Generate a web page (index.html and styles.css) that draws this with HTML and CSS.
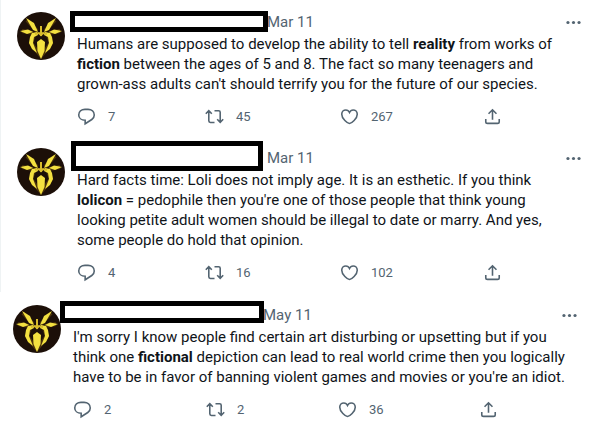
FILE: index.html
```
<!DOCTYPE html>
<html lang="en">
<head>
  <meta charset="UTF-8" />
  <meta name="viewport" content="width=device-width, initial-scale=1.0"/>
  <title>Tweets</title>
  <link rel="stylesheet" href="styles.css">
</head>
<body>

<!-- shared icons -->
<svg class="sprite" aria-hidden="true">
  <symbol id="avatar" viewBox="0 0 48 48">
    <circle cx="24" cy="24" r="24" fill="#1c0f08"/>
    <g fill="none" stroke="#6b4c0c" stroke-width="4" opacity=".6">
      <path d="M17 23 L14 31 L19 38 L24 44 L29 38 L34 31 L31 23"/>
      <path d="M10 8 L20 19 M38 8 L28 19 M5 19 L16 21 M43 19 L32 21"/>
    </g>
    <g fill="#f3e040">
      <path d="M9 6 L17 11 L21 20 L16 18 Z"/>
      <path d="M39 6 L31 11 L27 20 L32 18 Z"/>
      <path d="M3 19 L11 17.500 L16 20 L10 22 Z"/>
      <path d="M45 19 L37 17.500 L32 20 L38 22 Z"/>
      <path d="M24 27 L28 30 L27.500 39 L24 47 L20.500 39 L20 30 Z"/>
      <path d="M20 20 L15 21 L13 25 L12 31 L15 37 L20 41 L18 36 L16 31 L17 25 L21 23 Z"/>
      <path d="M28 20 L33 21 L35 25 L36 31 L33 37 L28 41 L30 36 L32 31 L31 25 L27 23 Z"/>
    </g>
    <path d="M24 14 V24 M18 22 L22 21 L24 23 L26 21 L30 22" fill="none" stroke="#d8bc2c" stroke-width="2"/>
  </symbol>
  <symbol id="reply" viewBox="0 0 24 24">
    <path d="M14 3 H10 C5.500 3 2.200 6 2.200 10 C2.200 14 5.500 16.700 10.300 16.700 V21.200 C12.500 19.800 16.800 17.100 18.700 15.800 C20.800 14.300 21.800 12.100 21.800 10 C21.800 6 18.500 3 14 3 Z"/>
  </symbol>
  <symbol id="retweet" viewBox="0 0 24 24">
    <path d="M1 8.500 L4.800 4.700 L8.600 8.500 M4.800 5 V17.500 Q4.800 19.500 6.800 19.500 H12 M12 4.700 H17.200 Q19.200 4.700 19.200 6.700 V19 M15.400 15.500 L19.200 19.300 L23 15.500"/>
  </symbol>
  <symbol id="like" viewBox="0 0 24 24">
    <path d="M12 20.900 C9.500 20.800 2.200 14.800 2.200 9.100 C2.200 6 4.600 3.700 7.400 3.700 C9.600 3.700 11.200 5 12 6.800 C12.800 5 14.400 3.700 16.600 3.700 C19.400 3.700 21.800 6 21.800 9.100 C21.800 14.800 14.500 20.800 12 20.900 Z"/>
  </symbol>
  <symbol id="share" viewBox="0 0 24 24">
    <path d="M12 16 V4 M7 8.500 L12 3.500 L17 8.500 M3.500 15 V18.500 Q3.500 20.700 5.700 20.700 H18.300 Q20.500 20.700 20.500 18.500 V15"/>
  </symbol>
  <symbol id="more" viewBox="0 0 24 24">
    <circle cx="5" cy="12" r="2"/>
    <circle cx="12" cy="12" r="2"/>
    <circle cx="19" cy="12" r="2"/>
  </symbol>
</svg>

<main>

  <article class="tweet">
    <svg class="avatar"><use href="#avatar"/></svg>
    <div class="content">
      <header class="head">
        <span class="redacted"></span>
        <time class="date">Mar 11</time>
        <button class="more" aria-label="More"><svg class="icon dots"><use href="#more"/></svg></button>
      </header>
      <p class="text">Humans are supposed to develop the ability to tell <b>reality</b> from works of<br><b>fiction</b> between the ages of 5 and 8. The fact so many teenagers and<br>grown-ass adults can't should terrify you for the future of our species.</p>
      <div class="actions">
        <button class="action" aria-label="Reply"><svg class="icon"><use href="#reply"/></svg>7</button>
        <button class="action" aria-label="Retweet"><svg class="icon"><use href="#retweet"/></svg>45</button>
        <button class="action" aria-label="Like"><svg class="icon"><use href="#like"/></svg>267</button>
        <button class="action" aria-label="Share"><svg class="icon"><use href="#share"/></svg></button>
      </div>
    </div>
  </article>

  <article class="tweet">
    <svg class="avatar"><use href="#avatar"/></svg>
    <div class="content">
      <header class="head">
        <span class="redacted tall"></span>
        <time class="date">Mar 11</time>
        <button class="more" aria-label="More"><svg class="icon dots"><use href="#more"/></svg></button>
      </header>
      <p class="text">Hard facts time: Loli does not imply age. It is an esthetic. If you think<br><b>lolicon</b> = pedophile then you're one of those people that think young<br>looking petite adult women should be illegal to date or marry. And yes,<br>some people do hold that opinion.</p>
      <div class="actions">
        <button class="action" aria-label="Reply"><svg class="icon"><use href="#reply"/></svg>4</button>
        <button class="action" aria-label="Retweet"><svg class="icon"><use href="#retweet"/></svg>16</button>
        <button class="action" aria-label="Like"><svg class="icon"><use href="#like"/></svg>102</button>
        <button class="action" aria-label="Share"><svg class="icon"><use href="#share"/></svg></button>
      </div>
    </div>
  </article>

  <article class="tweet last">
    <svg class="avatar"><use href="#avatar"/></svg>
    <div class="content">
      <header class="head">
        <span class="redacted wide"></span>
        <time class="date">May 11</time>
        <button class="more" aria-label="More"><svg class="icon dots"><use href="#more"/></svg></button>
      </header>
      <p class="text">I'm sorry I know people find certain art disturbing or upsetting but if you<br>think one <b>fictional</b> depiction can lead to real world crime then you logically<br>have to be in favor of banning violent games and movies or you're an idiot.</p>
      <div class="actions">
        <button class="action" aria-label="Reply"><svg class="icon"><use href="#reply"/></svg>2</button>
        <button class="action" aria-label="Retweet"><svg class="icon"><use href="#retweet"/></svg>2</button>
        <button class="action" aria-label="Like"><svg class="icon"><use href="#like"/></svg>36</button>
        <button class="action" aria-label="Share"><svg class="icon"><use href="#share"/></svg></button>
      </div>
    </div>
  </article>

</main>

</body>
</html>
```
FILE: styles.css
```
body {
  margin: 0;
  background: #fff;
  color: #0f1419;
  font-family: Roboto, "Liberation Sans", sans-serif;
  font-size: 15px;
  line-height: 20px;
}
.sprite {
  position: absolute;
  width: 0;
  height: 0;
}
.tweet {
  display: flex;
  gap: 12px;
  padding: 12px 9px 10px 16px;
  border-left: 1px solid #eff3f4;
}
.tweet.last {
  padding: 13px 13px 10px 13px;
  border-left: none;
}
.avatar {
  width: 48px;
  height: 48px;
  flex: none;
}
.content {
  flex: 1;
  min-width: 0;
}
.head {
  position: relative;
  display: flex;
  justify-content: space-between;
  height: 20px;
  padding-left: 190px;
  margin-bottom: 2px;
  color: #536471;
}
/* bar over the account name */
.redacted {
  position: absolute;
  box-sizing: border-box;
  top: -1px;
  left: -7px;
  width: 198px;
  height: 21px;
  border: 5px solid #000;
  background: #fff;
}
.redacted.tall {
  top: -7px;
  left: -6px;
  width: 192px;
  height: 30px;
}
.redacted.wide {
  top: -4px;
  left: -13px;
  width: 204px;
  height: 22px;
}
button {
  padding: 0;
  border: none;
  background: none;
  color: #536471;
  font-family: inherit;
  cursor: pointer;
}
.more {
  display: flex;
  align-items: center;
}
.text {
  margin: 0;
  white-space: nowrap;
}
.actions {
  display: grid;
  grid-template-columns: 128px 135px 143px auto;
  margin-top: 12px;
}
.last .actions {
  grid-template-columns: 133px 132px 141px auto;
}
.action {
  display: flex;
  align-items: center;
  gap: 12px;
  height: 20px;
  font-size: 13px;
}
.icon {
  width: 19px;
  height: 19px;
  fill: none;
  stroke: #536471;
  stroke-width: 2;
}
.dots {
  fill: #536471;
  stroke: none;
}
```
